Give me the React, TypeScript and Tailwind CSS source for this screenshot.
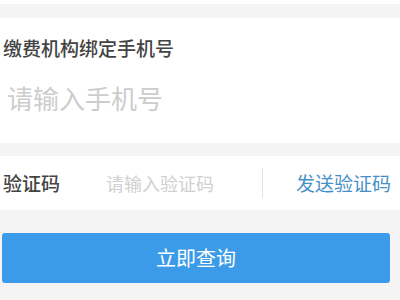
import React from "react";

export default function App() {
  const font = { fontFamily: '"Noto Sans CJK SC", "Noto Sans", sans-serif' };
  return (
    <div className="w-[400px] h-[300px] bg-[#f4f4f5] flex flex-col overflow-hidden" style={font}>
      <div className="h-[4px] bg-white" />
      <div className="h-[14px]" />
      <div className="h-[125px] bg-white flex flex-col pl-[3px] pt-[19px]">
        <div className="text-[19px] leading-[21px] font-medium text-[#444444]">缴费机构绑定手机号</div>
        <div className="mt-[26px] pl-[4px] text-[26px] leading-[28px] text-[#cdcdcd]">请输入手机号</div>
      </div>
      <div className="h-[13px]" />
      <div className="h-[54px] bg-white flex items-center pl-[3px]">
        <div className="w-[103px] text-[19px] leading-[22px] font-medium text-[#444444]">验证码</div>
        <div className="w-[156px] text-[18px] leading-[22px] text-[#d0d0d0]">请输入验证码</div>
        <div className="w-[1px] h-[30px] bg-[#e2e2e2]" />
        <div className="ml-[33px] text-[19px] leading-[22px] text-[#4590c6]">发送验证码</div>
      </div>
      <div className="h-[23px]" />
      <div className="ml-[2px] w-[388px] h-[50px] rounded-[3px] bg-[#3b9be8] flex items-center justify-center">
        <span className="text-[20px] leading-[22px] text-white">立即查询</span>
      </div>
    </div>
  );
}
